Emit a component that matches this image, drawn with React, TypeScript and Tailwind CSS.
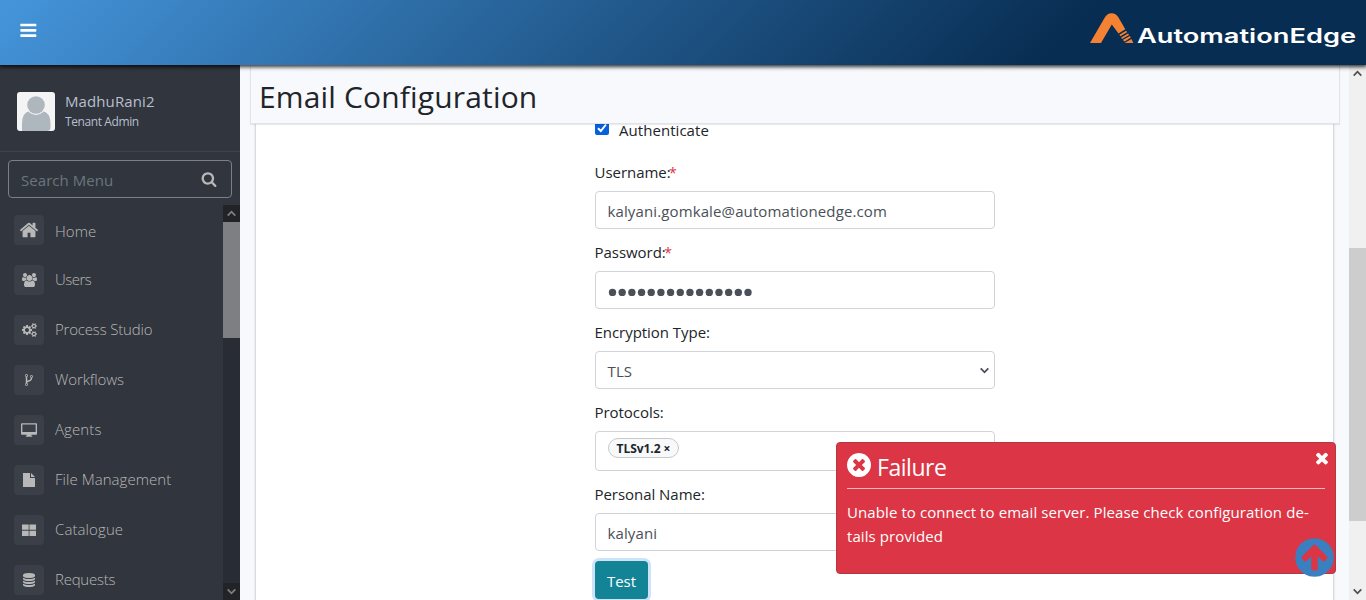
import React from "react";

type IconProps = { d: string; w?: number; size: number; className?: string };

const Icon = ({ d, w = 1792, size, className }: IconProps) => (
  <svg viewBox={`0 0 ${w} 1792`} width={(size * w) / 1792} height={size} fill="currentColor" className={className}>
    <path d={d} />
  </svg>
);

const circle =
  "q0 209-103 385.5t-279.5 279.5-385.5 103-385.5-103-279.5-279.5-103-385.5 103-385.5 279.5-279.5 385.5-103 385.5 103 279.5 279.5 103 385.5z";
const paths = {
  bars: "M1664 1344v128q0 26-19 45t-45 19h-1408q-26 0-45-19t-19-45v-128q0-26 19-45t45-19h1408q26 0 45 19t19 45zm0-512v128q0 26-19 45t-45 19h-1408q-26 0-45-19t-19-45v-128q0-26 19-45t45-19h1408q26 0 45 19t19 45zm0-512v128q0 26-19 45t-45 19h-1408q-26 0-45-19t-19-45v-128q0-26 19-45t45-19h1408q26 0 45 19t19 45z",
  search:
    "M1216 832q0-185-131.5-316.5t-316.5-131.5-316.5 131.5-131.5 316.5 131.5 316.5 316.5 131.5 316.5-131.5 131.5-316.5zm512 832q0 52-38 90t-90 38q-54 0-90-38l-343-342q-179 124-399 124-143 0-273.5-55.5t-225-150-150-225-55.5-273.5 55.5-273.5 150-225 225-150 273.5-55.5 273.5 55.5 225 150 150 225 55.5 273.5q0 220-124 399l343 343q37 37 37 90z",
  home: "M1472 992v480q0 26-19 45t-45 19h-384v-384h-256v384h-384q-26 0-45-19t-19-45v-480q0-1 .5-3t.5-3l575-474 575 474q1 2 1 6zm223-69l-62 74q-8 9-21 11h-3q-13 0-21-7l-692-577-692 577q-12 8-24 7-13-2-21-11l-62-74q-8-10-7-23.5t11-21.5l719-599q32-26 76-26t76 26l244 204v-195q0-14 9-23t23-9h192q14 0 23 9t9 23v408l219 182q10 8 11 21.5t-7 23.5z",
  users:
    "M593 896q-162 5-265 128h-134q-82 0-138-40.5t-56-118.5q0-353 124-353 6 0 43.5 21t97.5 42.5 119 21.5q67 0 133-23-5 37-5 66 0 139 81 256zm1071 637q0 120-73 189.5t-194 69.5h-874q-121 0-194-69.5t-73-189.5q0-53 3.5-103.5t14-109 26.5-108.5 43-97.5 62-81 85.5-53.5 111.5-20q10 0 43 21.5t73 48 107 48 135 21.5 135-21.5 107-48 73-48 43-21.5q61 0 111.5 20t85.5 53.5 62 81 43 97.5 26.5 108.5 14 109 3.5 103.5zm-1024-1277q0 106-75 181t-181 75-181-75-75-181 75-181 181-75 181 75 75 181zm704 384q0 159-112.5 271.5t-271.5 112.5-271.5-112.5-112.5-271.5 112.5-271.5 271.5-112.5 271.5 112.5 112.5 271.5zm576 225q0 78-56 118.5t-138 40.5h-134q-103-123-265-128 81-117 81-256 0-29-5-66 66 23 133 23 59 0 119-21.5t97.5-42.5 43.5-21q124 0 124 353zm-128-609q0 106-75 181t-181 75-181-75-75-181 75-181 181-75 181 75 75 181z",
  cogs: "M896 896q0-106-75-181t-181-75-181 75-75 181 75 181 181 75 181-75 75-181zm768 512q0-52-38-90t-90-38-90 38-38 90q0 53 37.5 90.5t90.5 37.5 90.5-37.5 37.5-90.5zm0-1024q0-52-38-90t-90-38-90 38-38 90q0 53 37.5 90.5t90.5 37.5 90.5-37.5 37.5-90.5zm-384 421v185q0 10-7 19.5t-16 10.5l-155 24q-11 35-32 76 34 48 90 115 7 11 7 20 0 12-7 19-23 30-82.5 89.5t-78.5 59.5q-11 0-21-7l-115-90q-37 19-77 31-11 108-23 155-7 24-30 24h-186q-11 0-20-7.5t-10-17.5l-23-153q-34-10-75-31l-118 89q-7 7-20 7-11 0-21-8-144-133-144-160 0-9 7-19 10-14 41-53t47-61q-23-44-35-82l-152-24q-10-1-17-9.5t-7-19.5v-185q0-10 7-19.5t16-10.5l155-24q11-35 32-76-34-48-90-115-7-11-7-20 0-12 7-20 22-30 82-89t79-59q11 0 21 7l115 90q34-18 77-32 11-108 23-154 7-24 30-24h186q11 0 20 7.5t10 17.5l23 153q34 10 75 31l118-89q8-7 20-7 11 0 21 8 144 133 144 160 0 8-7 19-12 16-42 54t-45 60q23 48 34 82l152 23q10 2 17 10.5t7 19.5zm640 533v140q0 16-149 31-12 27-30 52 51 113 51 138 0 4-4 7-122 71-124 71-8 0-46-47t-52-68q-20 2-30 2t-30-2q-14 21-52 68t-46 47q-2 0-124-71-4-3-4-7 0-25 51-138-18-25-30-52-149-15-149-31v-140q0-16 149-31 13-29 30-52-51-113-51-138 0-4 4-7 4-2 35-20t59-34 30-16q8 0 46 46.5t52 67.5q20-2 30-2t30 2q51-71 92-112l6-2q4 0 124 70 4 3 4 7 0 25-51 138 17 23 30 52 149 15 149 31zm0-1024v140q0 16-149 31-12 27-30 52 51 113 51 138 0 4-4 7-122 71-124 71-8 0-46-47t-52-68q-20 2-30 2t-30-2q-14 21-52 68t-46 47q-2 0-124-71-4-3-4-7 0-25 51-138-18-25-30-52-149-15-149-31v-140q0-16 149-31 13-29 30-52-51-113-51-138 0-4 4-7 4-2 35-20t59-34 30-16q8 0 46 46.5t52 67.5q20-2 30-2t30 2q51-71 92-112l6-2q4 0 124 70 4 3 4 7 0 25-51 138 17 23 30 52 149 15 149 31z",
  fork: "M672 1472q0-40-28-68t-68-28-68 28-28 68 28 68 68 28 68-28 28-68zm0-1152q0-40-28-68t-68-28-68 28-28 68 28 68 68 28 68-28 28-68zm640 128q0-40-28-68t-68-28-68 28-28 68 28 68 68 28 68-28 28-68zm96 0q0 52-26 96.5t-70 69.5q-2 287-226 414-67 38-203 81-128 40-169.5 71t-41.5 100v26q44 25 70 69.5t26 96.5q0 80-56 136t-136 56-136-56-56-136q0-52 26-96.5t70-69.5v-820q-44-25-70-69.5t-26-96.5q0-80 56-136t136-56 136 56 56 136q0 52-26 96.5t-70 69.5v497q54-26 154-57 55-17 87.5-29.5t70.5-31 59-39.5 40.5-51 28-69.5 8.5-91.5q-44-25-70-69.5t-26-96.5q0-80 56-136t136-56 136 56 56 136z",
  database:
    "M896 768q237 0 443-43t325-127v170q0 69-103 128t-280 93.5-385 34.5-385-34.5-280-93.5-103-128v-170q119 84 325 127t443 43zm0 768q237 0 443-43t325-127v170q0 69-103 128t-280 93.5-385 34.5-385-34.5-280-93.5-103-128v-170q119 84 325 127t443 43zm0-384q237 0 443-43t325-127v170q0 69-103 128t-280 93.5-385 34.5-385-34.5-280-93.5-103-128v-170q119 84 325 127t443 43zm0-1152q208 0 385 34.5t280 93.5 103 128v128q0 69-103 128t-280 93.5-385 34.5-385-34.5-280-93.5-103-128v-128q0-69 103-128t280-93.5 385-34.5z",
  desktop:
    "M0 230q0-90 90-90h1612q90 0 90 90v1100q0 90-90 90h-546v120h100v120h-720v-120h100v-120h-546q-90 0-90-90zM150 290v820h1492v-820z",
  file: "M128 0h896v640h640v1152h-1536zM1152 0l512 512h-512z",
  tiles: "M0 180h800v620h-800zM890 180h800v620h-800zM0 920h800v620h-800zM890 920h800v620h-800z",
  timesCircle:
    "M1277 1122q0-26-19-45l-181-181 181-181q19-19 19-45 0-27-19-46l-90-90q-19-19-46-19-26 0-45 19l-181 181-181-181q-19-19-45-19-27 0-46 19l-90 90q-19 19-19 46 0 26 19 45l181 181-181 181q-19 19-19 45 0 27 19 46l90 90q19 19 46 19 26 0 45-19l181-181 181 181q19 19 45 19 27 0 46-19l90-90q19-19 19-46zm387-226" +
    circle,
  arrowUp:
    "M1412 897q0-27-18-45l-362-362-91-91q-18-18-45-18t-45 18l-91 91-362 362q-18 18-18 45t18 45l91 91q18 18 45 18t45-18l189-189v502q0 26 19 45t45 19h128q26 0 45-19t19-45v-502l189 189q19 19 45 19t45-19l91-91q18-18 18-45zm252-1" +
    circle,
  times:
    "M1490 1322q0 40-28 68l-136 136q-28 28-68 28t-68-28l-294-294-294 294q-28 28-68 28t-68-28l-136-136q-28-28-28-68t28-68l294-294-294-294q-28-28-28-68t28-68l136-136q28-28 68-28t68 28l294 294 294-294q28-28 68-28t68 28l136 136q28 28 28 68t-28 68l-294 294 294 294q28 28 28 68z",
};

const menu = [
  { label: "Home", d: paths.home, w: 1792, size: 20, text: "pt-[3px] tracking-[0.05px]" },
  { label: "Users", d: paths.users, w: 1920, size: 14, text: "-mt-px tracking-[-0.5px]" },
  { label: "Process Studio", d: paths.cogs, w: 1920, size: 14, text: "-mt-px tracking-[-0.18px]" },
  { label: "Workflows", d: paths.fork, w: 1792, size: 14, text: "-mt-px tracking-[-0.1px]" },
  { label: "Agents", d: paths.desktop, w: 1792, size: 16, text: "-mt-px tracking-[0.1px]" },
  { label: "File Management", d: paths.file, w: 1792, size: 14, text: "-mt-px tracking-[0.05px]" },
  { label: "Catalogue", d: paths.tiles, w: 1690, size: 15, text: "-mt-px tracking-[0.1px]" },
  { label: "Requests", d: paths.database, w: 1792, size: 14, text: "-mt-px tracking-[-0.25px]" },
];

const Chevron = ({ up = false, className }: { up?: boolean; className?: string }) => (
  <svg width="9" height="7" viewBox="0 0 9 7" fill="none" stroke="currentColor" strokeWidth="1.8" className={className}>
    <path d={up ? "M.7 5.7 4.5 1.7 8.3 5.7" : "M.7 1.3 4.5 5.3 8.3 1.3"} />
  </svg>
);

const Header = () => (
  <header className="relative z-30 flex h-[65px] shrink-0 items-center justify-between bg-[linear-gradient(135deg,#4595db_0%,#082d52_77%,#082d52_100%)] shadow-[0_1px_4px_1px_rgba(0,0,0,0.8)]">
    <Icon d={paths.bars} size={18.67} className="-mt-1 ml-[18.5px] text-white" />
    <svg width="290" height="65" viewBox="1076 0 290 65">
      <path
        fill="#f58233"
        d="M1090 43 1104.500 18Q1107 13.200 1111.500 13.200 1116 13.200 1118.500 17.500L1125.300 29.200 1118.500 33.400 1111.800 24.500 1101 43ZM1119.400 34.800l6.800-4 .9 1.500-6.800 4ZM1121.200 37.500l6.900-4 .9 1.500-7 4ZM1122.700 40l7.200-4 .9 1.500-6 4ZM1124.500 43l7-4 1.800 4Z"
      />
      <text
        x="1137"
        y="43"
        fill="#fff"
        fontFamily="Inter, sans-serif"
        fontSize="19.5"
        fontWeight="600"
        textLength="219"
        lengthAdjust="spacingAndGlyphs"
      >
        AutomationEdge
      </text>
    </svg>
  </header>
);

const Sidebar = () => (
  <aside className="flex w-[240px] shrink-0 flex-col bg-[#31353d]">
    <div className="flex h-[87px] items-center border-b border-[#3f434d] pt-[6px] pl-[17px]">
      <svg width="38" height="39" viewBox="0 0 38 39">
        <rect width="38" height="39" rx="3" fill="#f4f4f4" />
        <path d="M5 39V32Q5 20 13 19H25Q33.500 20 33.500 32V36Q33 39 30 39Z" fill="#aeb6be" />
        <circle cx="19" cy="13" r="10" fill="#f4f4f4" />
        <circle cx="19" cy="13" r="8.800" fill="#aeb6be" />
      </svg>
      <div className="ml-[10px] flex flex-col text-[#b8bfce]">
        <span className="text-[15px] leading-[21px] tracking-[0.1px]">MadhuRani2</span>
        <span className="text-[12px] leading-5 tracking-[-0.4px]">Tenant Admin</span>
      </div>
    </div>
    <div className="mx-2 mt-2 flex h-[38px] shrink-0 items-center justify-between rounded border border-[#7c7f85] pr-[14px] pl-3">
      <span className="pt-[3px] text-[15px] tracking-[0.05px] text-[#6c757d]">Search Menu</span>
      <Icon d={paths.search} size={16} className="text-[#b8b8b8]" />
    </div>
    <div className="mt-[7px] flex min-h-0 flex-1">
      <nav className="flex flex-1 flex-col gap-5 overflow-hidden pt-[10px] pl-[14px]">
        {menu.map((m) => (
          <div key={m.label} className="flex h-[30px] shrink-0 items-center">
            <span className="flex size-[30px] items-center justify-center rounded bg-[#3a3f48] text-[#b8b8b8]">
              <Icon d={m.d} w={m.w} size={m.size} />
            </span>
            <span className={`ml-[11px] text-[15px] font-light text-[#b8b8b8] ${m.text}`}>{m.label}</span>
          </div>
        ))}
      </nav>
      <div className="flex w-[17px] flex-col bg-[#282c34] text-[#7e7f83]">
        <div className="flex h-[17px] items-center justify-center bg-[#212327]">
          <Chevron up />
        </div>
        <div className="h-[116px] bg-[#7e7f83]" />
        <div className="mt-auto flex h-[17px] items-center justify-center bg-[#212327]">
          <Chevron />
        </div>
      </div>
    </div>
  </aside>
);

const Label = ({ children, required }: { children: React.ReactNode; required?: boolean }) => (
  <div className="-ml-[0.5px] h-6 pt-px text-[15px] leading-6 tracking-[-0.04px] text-[#212529]">
    {children}
    {required && <span className="-ml-[1.5px] text-[14px] text-[#dc3545]">*</span>}
  </div>
);

const field =
  "mt-2 flex h-[38px] shrink-0 items-center rounded border border-[#ced4da] bg-white pt-[2px] pl-[11.5px] text-[15px] tracking-[0.12px] text-[#495057]";

const Main = () => (
  <main className="flex min-w-0 flex-1 bg-[#f8f9fc]">
    <div className="flex flex-1 flex-col pr-[9px] pl-[10px]">
      <h1 className="z-10 flex h-[59px] shrink-0 items-center border border-t-0 border-[#e0e4e8] bg-[#f8f9fc] pt-[4px] pl-2 text-[30px] tracking-[0.16px] text-[#212529] shadow-[0_1px_1px_rgba(0,0,0,0.08)]">
        Email Configuration
      </h1>
      <div className="mr-[6px] ml-[5px] min-h-0 flex-1 border-x border-[#d8dbe0] bg-white pl-[339px] shadow-[0_0_2px_rgba(0,0,0,0.15)]">
        <div className="flex w-[400px] flex-col">
          <div className="-mt-[7px] flex h-6 items-center">
            <span className="mt-[-3px] flex size-[14px] items-center justify-center rounded-xs bg-[#0560de]">
              <svg width="12" height="12" viewBox="0 0 12 12" fill="none" stroke="#fff" strokeWidth="2">
                <path d="M2 6.200 4.800 9 10 2.500" />
              </svg>
            </span>
            <span className="ml-[10px] pt-[2px] text-[15px] tracking-[0.05px] text-[#212529]">Authenticate</span>
          </div>
          <div className="h-[18px]" />
          <Label required>Username:</Label>
          <div className={field}>kalyani.gomkale@automationedge.com</div>
          <div className="h-[10px]" />
          <Label required>Password:</Label>
          <div className={field}>
            <svg width="146" height="10" viewBox="0 0 146 10" fill="#495057">
              {Array.from({ length: 15 }, (_, i) => (
                <circle key={i} cx={4.5 + i * 9.68} cy="6.5" r="3.700" />
              ))}
            </svg>
          </div>
          <div className="h-[10px]" />
          <Label>Encryption Type:</Label>
          <div className={`${field} justify-between pr-[5px]`}>
            <span>TLS</span>
            <Chevron className="mt-[-1px] text-[#495057]" />
          </div>
          <div className="h-[10px]" />
          <Label>Protocols:</Label>
          <div className="mt-2 h-10 rounded border border-[#ced4da] pt-[6px] pl-3">
            <span className="flex h-5 w-[71px] items-center justify-center rounded-full border border-[#c8c8c8] bg-[#f8f9fa] pt-px text-[12px] font-bold tracking-[-0.05px] text-[#212529]">
              TLSv1.2 ×
            </span>
          </div>
          <div className="h-[10px]" />
          <Label>Personal Name:</Label>
          <div className={field}>kalyani</div>
          <button className="mt-[10px] h-[38px] w-[53px] shrink-0 rounded bg-[#138496] pt-[2px] text-[15px] text-white ring-[3px] ring-[#cfe3f8]">
            Test
          </button>
        </div>
      </div>
    </div>
    <div className="flex w-[17px] flex-col items-center bg-[#f0f0f0] text-[#505050]">
      <Chevron up className="mt-[5px]" />
      <div className="mt-[171px] h-[273px] w-full bg-[#cdcdcd]" />
      <Chevron className="mt-auto mb-[5px]" />
    </div>
  </main>
);

const Toast = () => (
  <div className="absolute top-[442px] left-[836px] z-20 h-[132px] w-[500px] rounded border border-[#b03a40] bg-[#dc3545] px-[10px] text-white">
    <div className="flex h-[46px] items-center border-b border-white/65">
      <Icon d={paths.timesCircle} size={28} className="-mt-[2px] -ml-[2px]" />
      <span className="ml-1 pt-1 text-[23px] tracking-[-0.45px]">Failure</span>
      <Icon d={paths.times} size={18} className="-mt-4 -mr-[5.5px] ml-auto" />
    </div>
    <p className="mt-[11px] text-[15px] leading-6 tracking-[0.09px]">
      Unable to connect to email server. Please check configuration de-
      <br />
      tails provided
    </p>
    <Icon d={paths.arrowUp} size={45} className="absolute top-[92px] left-[455px] text-[#3a80c0]" />
  </div>
);

export default function App() {
  return (
    <div className="relative flex h-[600px] w-[1366px] flex-col overflow-hidden font-['Open_Sans','Noto_Sans',sans-serif]">
      <Header />
      <div className="flex min-h-0 flex-1">
        <Sidebar />
        <Main />
      </div>
      <Toast />
    </div>
  );
}
